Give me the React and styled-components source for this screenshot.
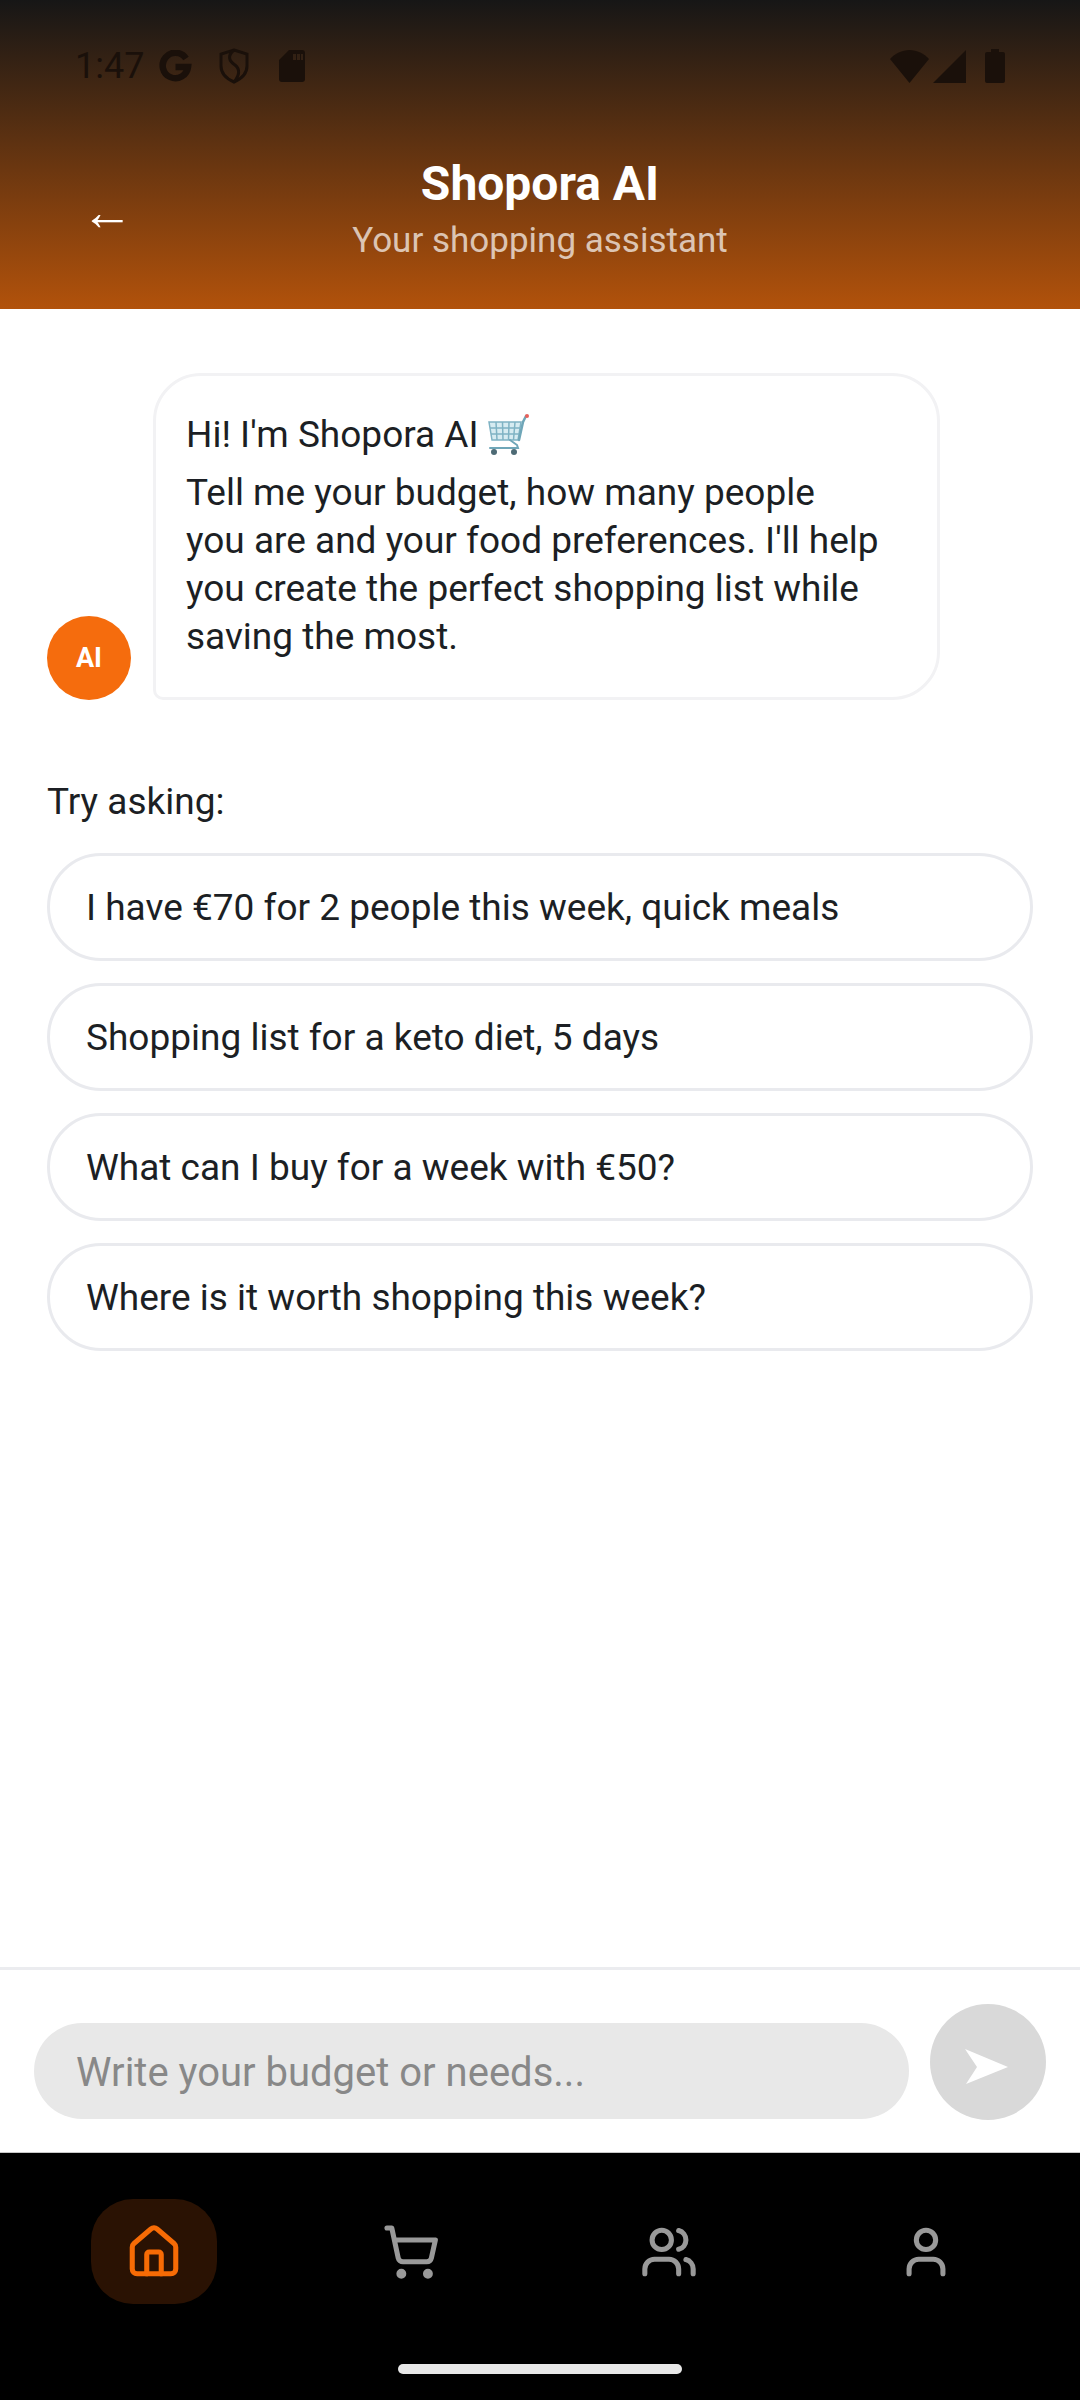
import React from 'react';
import styled, { createGlobalStyle } from 'styled-components';
import { House, ShoppingCart, Users, User } from 'lucide-react';

const GlobalStyle = createGlobalStyle`
  html, body {
    margin: 0;
    padding: 0;
    background: #fff;
  }
  * {
    box-sizing: border-box;
  }
`

const Screen = styled.div`
  width: 1080px;
  height: 2400px;
  display: flex;
  flex-direction: column;
  font-family: Roboto, "Liberation Sans", sans-serif;
  background-color: #fff;
  overflow: hidden;
`

const Header = styled.header`
  height: 309px;
  flex-shrink: 0;
  display: flex;
  flex-direction: column;
  background: linear-gradient(180deg, #161616 0%, #b2520b 100%);
`

const StatusBar = styled.div`
  height: 48px;
  margin-top: 42px;
  padding: 0 75px;
  display: flex;
  align-items: center;
  justify-content: space-between;
  color: #1a100a;
`

const StatusGroup = styled.div`
  display: flex;
  align-items: center;
`

const Time = styled.span`
  font-size: 36px;
  line-height: 48px;
  width: 84px;
`

const HeaderRow = styled.div`
  display: grid;
  grid-template-columns: 195px 1fr 195px;
  margin-top: 66px;
  align-items: center;
`

const BackArrow = styled.span`
  padding-left: 81px;
  padding-top: 6px;
  font-family: "Liberation Sans", sans-serif;
  font-size: 52px;
  line-height: 48px;
  color: #fff;
`

const HeaderText = styled.div`
  display: flex;
  flex-direction: column;
  align-items: center;
`

const Title = styled.h1`
  margin: 0;
  font-size: 48px;
  line-height: 56px;
  font-weight: 700;
  color: #fff;
`

const Subtitle = styled.span`
  font-size: 35px;
  line-height: 40px;
  margin-top: 9px;
  color: rgba(255, 255, 255, 0.7);
`

const Chat = styled.main`
  flex: 1;
  padding: 64px 47px 0;
  display: flex;
  flex-direction: column;
`

const MessageRow = styled.div`
  display: flex;
  align-items: flex-end;
  gap: 22px;
`

const Avatar = styled.div`
  width: 84px;
  height: 84px;
  border-radius: 50%;
  flex-shrink: 0;
  display: flex;
  align-items: center;
  justify-content: center;
  background-color: #f56c0d;
  color: #fff;
  font-size: 27px;
  font-weight: 700;
`

const Bubble = styled.div`
  width: 787px;
  height: 327px;
  padding: 35px 55px 0 30px;
  border: 3px solid #f2f2f4;
  border-radius: 48px 48px 48px 10px;
  color: #1c1f24;
  font-size: 37px;
  line-height: 48px;
`

const BubbleLine = styled.div`
  display: flex;
  align-items: center;
  gap: 9px;
  margin-bottom: 10px;
`

const Prompt = styled.div`
  margin-top: 78px;
  font-size: 37px;
  line-height: 48px;
  color: #1c1f24;
`

const Suggestions = styled.div`
  margin-top: 27px;
  width: 986px;
  display: flex;
  flex-direction: column;
  gap: 22px;
`

const Suggestion = styled.div`
  height: 108px;
  padding: 0 36px;
  display: flex;
  align-items: center;
  border: 3px solid #e9eaee;
  border-radius: 54px;
  font-size: 37px;
  color: #1c1f24;
`

const Composer = styled.div`
  height: 186px;
  flex-shrink: 0;
  padding: 34px 34px 0;
  display: flex;
  gap: 21px;
  border-top: 3px solid #ebecef;
  border-bottom: 1px solid #c8c8c8;
`

const Field = styled.div`
  width: 875px;
  height: 96px;
  margin-top: 19px;
  padding: 3px 42px 0;
  display: flex;
  align-items: center;
  border-radius: 48px;
  background-color: #e8e8e8;
  font-size: 40px;
  color: #888;
`

const SendButton = styled.div`
  width: 116px;
  height: 116px;
  border-radius: 50%;
  display: flex;
  align-items: center;
  justify-content: center;
  background-color: #d9d9d9;
`

const Nav = styled.nav`
  height: 247px;
  flex-shrink: 0;
  padding: 46px 25px 0;
  display: flex;
  flex-direction: column;
  align-items: center;
  background-color: #000;
`

const NavItems = styled.div`
  width: 100%;
  display: grid;
  grid-template-columns: repeat(4, 1fr);
`

const NavItem = styled.div`
  height: 105px;
  display: flex;
  align-items: center;
  justify-content: center;
`

const NavIcon = styled.div`
  width: 126px;
  height: 105px;
  border-radius: 42px;
  display: flex;
  align-items: center;
  justify-content: center;
  background-color: ${p => (p.$active ? '#2a1203' : 'transparent')};
  color: ${p => (p.$active ? '#f76b05' : '#999')};
`

const HomeBar = styled.div`
  width: 284px;
  height: 10px;
  margin-top: 60px;
  border-radius: 5px;
  background-color: #e8e8e8;
`

const GoogleIcon = () => (
  <svg width="33" height="33" viewBox="0 0 33 33" fill="none" stroke="currentColor" strokeWidth="6.5">
    <path d="M27 8.5A12.7 12.7 0 1 0 29 17H16.5" />
  </svg>
);

const ShieldIcon = () => (
  <svg width="30" height="36" viewBox="0 0 30 36" fill="none" stroke="currentColor" strokeWidth="3" style={{ marginLeft: 27 }}>
    <path d="M15 2 L28 6 V18 C28 26 22 31 15 34 C8 31 2 26 2 18 V6 Z" />
    <path d="M15 2 C8 8 10 13 16 17 C21 21 21 27 15 34" />
  </svg>
);

const SdIcon = () => (
  <svg width="26" height="32" viewBox="0 0 26 32" style={{ marginLeft: 30 }}>
    <path fill="currentColor" fillRule="evenodd" d="M10 0H23a3 3 0 0 1 3 3V29a3 3 0 0 1-3 3H3a3 3 0 0 1-3-3V10ZM14 4v6h3V4ZM18 4v6h3V4ZM22 4v6h2V4Z" />
  </svg>
);

const WifiIcon = () => (
  <svg width="39" height="33" viewBox="0 0 39 33">
    <path fill="currentColor" d="M19.5 33L0 9C5 3.500 12 0 19.500 0S34 3.500 39 9Z" />
  </svg>
);

const SignalIcon = () => (
  <svg width="33" height="33" viewBox="0 0 33 33" style={{ marginLeft: 4 }}>
    <path fill="currentColor" d="M33 0V33H0Z" />
  </svg>
);

const BatteryIcon = () => (
  <svg width="20" height="34" viewBox="0 0 20 34" style={{ marginLeft: 19 }}>
    <path fill="currentColor" d="M6 0H14V3H18a2 2 0 0 1 2 2V32a2 2 0 0 1-2 2H2a2 2 0 0 1-2-2V5a2 2 0 0 1 2-2H6Z" />
  </svg>
);

const CartEmoji = () => (
  <svg width="42" height="42" viewBox="0 0 42 42" fill="none">
    <path d="M1 8H33L30 26H4Z" fill="#d6ebf1" stroke="#7fb3c4" strokeWidth="1.5" />
    <path d="M8 8L9 26M14.500 8L15 26M21 8L20.500 26M27 8L25.500 26M2 14H32M3 20H31" stroke="#7fb3c4" strokeWidth="1.500" />
    <path d="M31 26L35 8L38 2" stroke="#6fa6b8" strokeWidth="2.500" strokeLinecap="round" />
    <path d="M22 26L29 31L30 34H2" stroke="#6fa6b8" strokeWidth="2" strokeLinecap="round" />
    <circle cx="39" cy="2" r="2" fill="#e8605a" />
    <circle cx="6" cy="38" r="3" fill="#4d6a75" />
    <circle cx="26" cy="38" r="3" fill="#4d6a75" />
  </svg>
);

const SendArrow = () => (
  <svg width="43" height="35" viewBox="0 0 43 35" style={{ marginTop: 9, marginRight: 3 }}>
    <path fill="#fff" d="M0 0L43 18L1 35L12 18Z" />
  </svg>
);

const suggestions = [
  'I have €70 for 2 people this week, quick meals',
  'Shopping list for a keto diet, 5 days',
  'What can I buy for a week with €50?',
  'Where is it worth shopping this week?',
];

const navIcons = [House, ShoppingCart, Users, User];

const App = () => (
  <Screen>
    <GlobalStyle />
    <Header>
      <StatusBar>
        <StatusGroup>
          <Time>1:47</Time>
          <GoogleIcon />
          <ShieldIcon />
          <SdIcon />
        </StatusGroup>
        <StatusGroup>
          <WifiIcon />
          <SignalIcon />
          <BatteryIcon />
        </StatusGroup>
      </StatusBar>
      <HeaderRow>
        <BackArrow>←</BackArrow>
        <HeaderText>
          <Title>Shopora AI</Title>
          <Subtitle>Your shopping assistant</Subtitle>
        </HeaderText>
      </HeaderRow>
    </Header>
    <Chat>
      <MessageRow>
        <Avatar>AI</Avatar>
        <Bubble>
          <BubbleLine>Hi! I'm Shopora AI <CartEmoji /></BubbleLine>
          Tell me your budget, how many people you are and your food preferences. I'll help you create the perfect shopping list while saving the most.
        </Bubble>
      </MessageRow>
      <Prompt>Try asking:</Prompt>
      <Suggestions>
        {suggestions.map(text => (
          <Suggestion key={text}>{text}</Suggestion>
        ))}
      </Suggestions>
    </Chat>
    <Composer>
      <Field>Write your budget or needs...</Field>
      <SendButton><SendArrow /></SendButton>
    </Composer>
    <Nav>
      <NavItems>
        {navIcons.map((Icon, i) => (
          <NavItem key={i}>
            <NavIcon $active={i === 0}><Icon size={58} strokeWidth={2.1} /></NavIcon>
          </NavItem>
        ))}
      </NavItems>
      <HomeBar />
    </Nav>
  </Screen>
);

export default App;
